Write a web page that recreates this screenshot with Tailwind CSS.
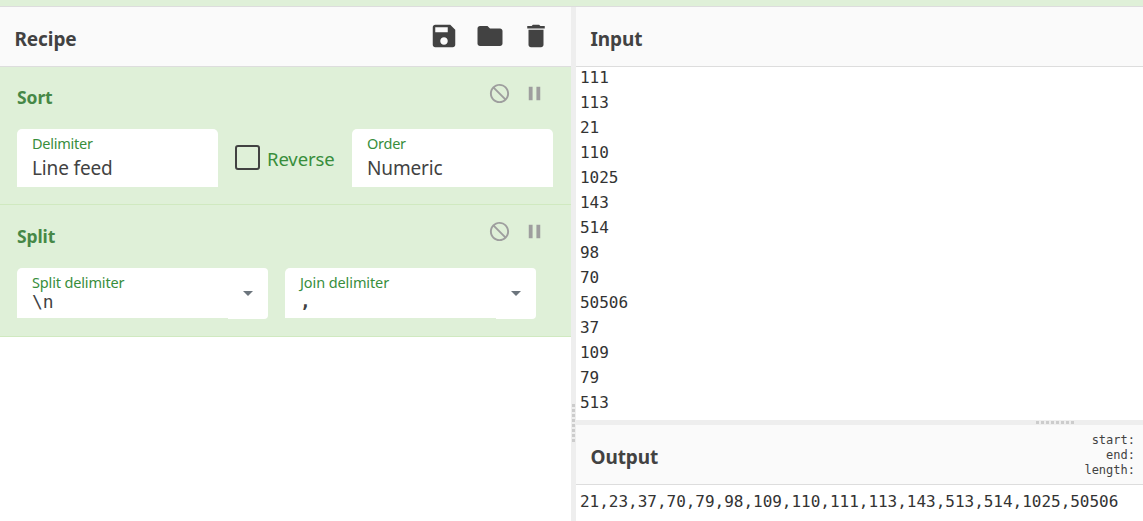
<!DOCTYPE html>
<html lang="en">
<head>
<meta charset="utf-8">
<title>Recipe</title>
<script src="https://cdn.jsdelivr.net/npm/@tailwindcss/browser@4"></script>
</head>
<body class="h-[521px] w-[1143px] overflow-hidden bg-white font-['Noto_Sans','Open_Sans',sans-serif] text-[#424242] flex flex-col">
<svg class="hidden">
  <symbol id="ban" viewBox="0 0 24 24"><path d="M12 2C6.480 2 2 6.480 2 12s4.480 10 10 10 10-4.480 10-10S17.520 2 12 2zM4 12c0-4.420 3.580-8 8-8 1.850 0 3.550.63 4.900 1.690L5.690 16.900C4.630 15.550 4 13.850 4 12zm8 8c-1.850 0-3.550-.63-4.900-1.690L18.310 7.100C19.370 8.450 20 10.150 20 12c0 4.420-3.580 8-8 8z" transform="matrix(-1 0 0 1 24 0)"/></symbol>
  <symbol id="pause" viewBox="0 0 24 24"><path d="M6 19h4V5H6v14zm8-14v14h4V5h-4z"/></symbol>
</svg>
<div class="h-[7px] shrink-0 border-b border-[#ddd] bg-[#dff0d8]"></div>
<div class="flex min-h-0 flex-1">
  <section class="flex w-[571px] shrink-0 flex-col">
    <header class="flex h-[60px] items-center justify-between border-b border-[#ddd] bg-[#fafafa] pl-[14.500px] pr-[20px]">
      <h2 class="pt-[6px] text-[19px] font-bold tracking-[-0.1px]">Recipe</h2>
      <div class="flex gap-4 fill-[#424242] pb-[2px]">
        <svg class="size-[30px]" viewBox="0 0 24 24"><path d="M17 3H5c-1.110 0-2 .9-2 2v14c0 1.100.89 2 2 2h14c1.100 0 2-.9 2-2V7l-4-4zm-5 16c-1.660 0-3-1.340-3-3s1.340-3 3-3 3 1.340 3 3-1.340 3-3 3zm3-10H5V5h10v4z"/></svg>
        <svg class="size-[30px]" viewBox="0 0 24 24"><path d="M10 4H4c-1.100 0-1.990.9-1.990 2L2 18c0 1.100.9 2 2 2h16c1.100 0 2-.9 2-2V8c0-1.100-.9-2-2-2h-8l-2-2z"/></svg>
        <svg class="size-[30px]" viewBox="0 0 24 24"><path d="M6 19c0 1.100.9 2 2 2h8c1.100 0 2-.9 2-2V7H6v12zM19 4h-3.500l-1-1h-5l-1 1H5v2h14V4z"/></svg>
      </div>
    </header>
    <article class="h-[138px] border-b border-[#d0e9c0] bg-[#dff0d8] px-[17px] pt-[15px]">
      <div class="flex h-[24px] justify-between">
        <h3 class="pt-[3px] text-[17.500px] leading-[24px] font-bold tracking-[-0.1px] text-[#468847]">Sort</h3>
        <div class="flex gap-[12px] fill-[#9e9e9e] pr-[8px]"><svg class="size-[23px]"><use href="#ban"/></svg><svg class="size-[23px]"><use href="#pause"/></svg></div>
      </div>
      <div class="mt-[23px] flex">
        <div class="h-[58px] w-[201px] rounded-t-[5px] bg-white pl-[15px] pt-[5px]">
          <div class="text-[14.500px] leading-[18px] tracking-[-0.25px] text-[#388e3c]">Delimiter</div>
          <div class="mt-[4px] text-[19px] leading-[24px] tracking-[-0.15px]">Line feed</div>
        </div>
        <div class="flex w-[134px] pl-[17px] pt-[16px]">
          <span class="size-[25px] rounded-[3px] border-2 border-[#424242]"></span>
          <span class="pl-[7px] pt-[2px] text-[18.500px] leading-[24px] tracking-[-0.1px] text-[#388e3c]">Reverse</span>
        </div>
        <div class="h-[58px] w-[201px] rounded-t-[5px] bg-white pl-[15px] pt-[5px]">
          <div class="text-[14.500px] leading-[18px] tracking-[-0.25px] text-[#388e3c]">Order</div>
          <div class="mt-[4px] text-[19px] leading-[24px] tracking-[-0.15px]">Numeric</div>
        </div>
      </div>
    </article>
    <article class="h-[132px] border-b border-[#d0e9c0] bg-[#dff0d8] px-[17px] pt-[15px]">
      <div class="flex h-[24px] justify-between">
        <h3 class="pt-[4px] text-[17.500px] leading-[24px] font-bold tracking-[-0.1px] text-[#468847]">Split</h3>
        <div class="flex gap-[12px] fill-[#9e9e9e] pr-[8px]"><svg class="size-[23px]"><use href="#ban"/></svg><svg class="size-[23px]"><use href="#pause"/></svg></div>
      </div>
      <div class="mt-[24px] flex gap-[17px]">
        <div class="flex w-[251px]">
          <div class="h-[50px] flex-1 rounded-tl-[5px] bg-white pl-[15px] pt-[5px]">
            <div class="text-[14.500px] leading-[18px] tracking-[-0.15px] text-[#388e3c]">Split delimiter</div>
            <div class="pt-px font-['DejaVu_Sans_Mono',monospace] text-[18px] leading-[20px]">\n</div>
          </div>
          <div class="flex h-[51px] w-[40px] items-center justify-center rounded-r-[4px] bg-white"><svg class="h-[5px] w-[10px] fill-[#6c757d]" viewBox="0 0 10 5"><path d="M0 0h10L5 5z"/></svg></div>
        </div>
        <div class="flex w-[251px]">
          <div class="h-[50px] flex-1 rounded-tl-[5px] bg-white pl-[15px] pt-[5px]">
            <div class="text-[14.500px] leading-[18px] tracking-[-0.1px] text-[#388e3c]">Join delimiter</div>
            <div class="pt-px font-['DejaVu_Sans_Mono',monospace] text-[18px] leading-[20px] font-bold">,</div>
          </div>
          <div class="flex h-[51px] w-[40px] items-center justify-center rounded-r-[4px] bg-white"><svg class="h-[5px] w-[10px] fill-[#6c757d]" viewBox="0 0 10 5"><path d="M0 0h10L5 5z"/></svg></div>
        </div>
      </div>
    </article>
  </section>
  <div class="w-[5px] shrink-0 bg-[#eee] pl-px pt-[397px]">
    <div class="h-[38px] w-[3px] bg-[repeating-linear-gradient(to_bottom,#ccc_0_3px,#eee_3px_5px)]"></div>
  </div>
  <section class="flex min-w-0 flex-1 flex-col">
    <header class="flex h-[60px] shrink-0 items-center border-b border-[#ddd] bg-[#fafafa] pl-[14.500px]">
      <h2 class="pt-[6px] text-[19px] font-bold tracking-[-0.1px]">Input</h2>
    </header>
    <div class="h-[353px] shrink-0 overflow-hidden">
    <pre class="-mt-[2px] pl-[4px] font-['DejaVu_Sans_Mono',monospace] text-[16px] leading-[25px] tracking-[-0.020px] text-[#333]">111
113
21
110
1025
143
514
98
70
50506
37
109
79
513</pre>
    </div>
    <div class="h-[5px] shrink-0 bg-[#eee] pl-[460px] pt-px">
      <div class="h-[3px] w-[38px] bg-[repeating-linear-gradient(to_right,#ccc_0_3px,#eee_3px_5px)]"></div>
    </div>
    <header class="flex h-[60px] shrink-0 items-center justify-between border-b border-[#ddd] bg-[#fafafa] pl-[14.500px] pr-[8px]">
      <h2 class="pt-[6px] text-[19px] font-bold tracking-[-0.1px]">Output</h2>
      <div class="pt-[2px] text-right font-['DejaVu_Sans_Mono',monospace] text-[12px] leading-[15px]"><div>start:</div><div>end:</div><div>length:</div></div>
    </header>
    <pre class="pl-[4px] pt-[4px] font-['DejaVu_Sans_Mono',monospace] text-[16px] leading-[25px] tracking-[-0.020px] text-[#333]">21,23,37,70,79,98,109,110,111,113,143,513,514,1025,50506</pre>
  </section>
</div>
</body>
</html>
